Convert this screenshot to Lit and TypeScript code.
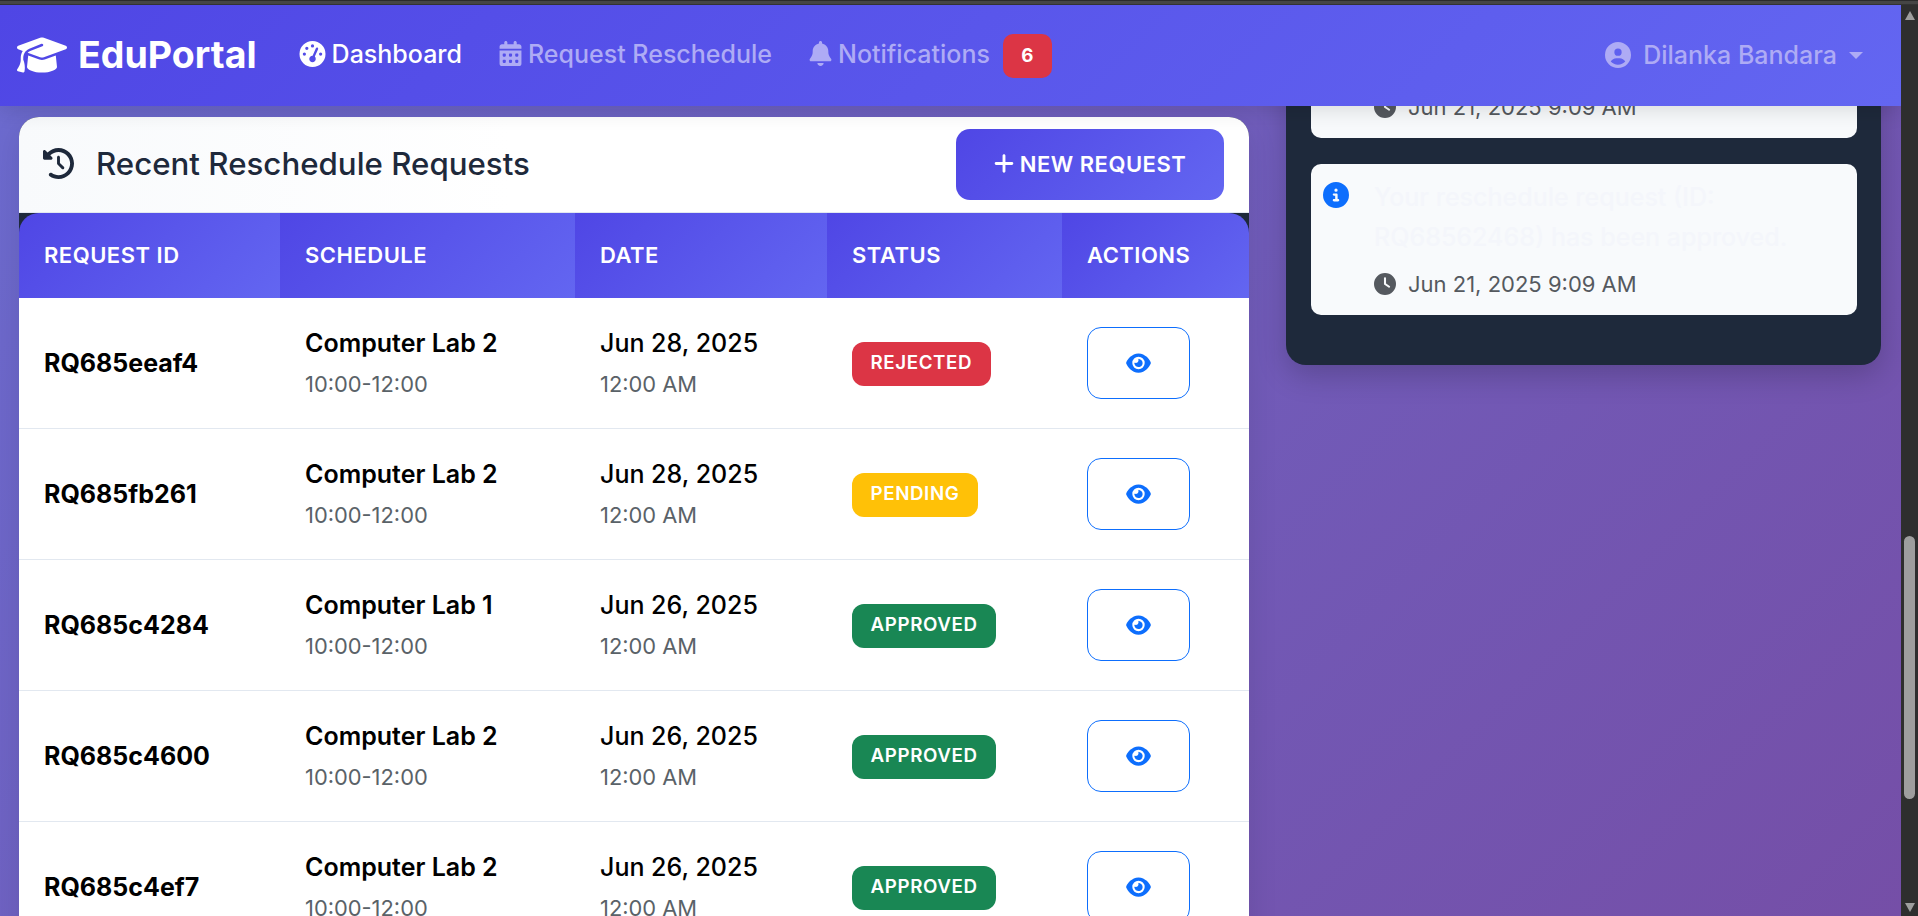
import { LitElement, html, css, svg } from "lit";
import { customElement } from "lit/decorators.js";

const I = {
  cap: ["0 0 640 512", "M320 32c-8.1 0-16.1 1.4-23.7 4.1L15.8 137.4C6.3 140.9 0 149.9 0 160s6.3 19.1 15.8 22.6l57.9 20.9C57.3 229.3 48 259.8 48 291.9v28.1c0 28.4-10.8 57.7-22.3 80.8c-6.5 13-13.9 25.8-22.5 37.6C0 442.7-.9 448.3 .9 453.4s6 8.9 11.2 10.2l64 16c4.2 1.1 8.7 .3 12.4-2s6.3-6.1 7.1-10.4c8.6-42.8 4.3-81.2-2.1-108.7C90.3 344.3 86 329.8 80 316.5V291.9c0-30.2 10.2-58.7 27.9-81.5c12.9-15.5 29.6-28 49.2-35.7l157-61.7c8.2-3.2 17.5 .8 20.7 9s-.8 17.5-9 20.7l-157 61.7c-12.4 4.9-23.3 12.4-32.2 21.6l159.6 57.6c7.6 2.7 15.6 4.1 23.7 4.1s16.1-1.4 23.7-4.1L624.2 182.6c9.5-3.4 15.8-12.5 15.8-22.6s-6.3-19.1-15.8-22.6L343.7 36.1C336.1 33.4 328.1 32 320 32zM128 408c0 35.3 86 72 192 72s192-36.7 192-72L496.7 262.6 354.5 314c-11.1 4-22.8 6-34.5 6s-23.5-2-34.5-6L143.3 262.6 128 408z"],
  gauge: ["0 0 512 512", "M0 256a256 256 0 1 1 512 0A256 256 0 1 1 0 256zM288 96a32 32 0 1 0 -64 0 32 32 0 1 0 64 0zM256 416c35.3 0 64-28.7 64-64c0-17.4-6.9-33.1-18.1-44.6L366 161.7c5.3-12.1-.2-26.3-12.3-31.6s-26.3 .2-31.6 12.3L257.9 288c-.6 0-1.3 0-1.9 0c-35.3 0-64 28.7-64 64s28.7 64 64 64zM176 144a32 32 0 1 0 -64 0 32 32 0 1 0 64 0zM96 288a32 32 0 1 0 0-64 32 32 0 1 0 0 64zm352-32a32 32 0 1 0 -64 0 32 32 0 1 0 64 0z"],
  cal: ["0 0 448 512", "M128 0c17.7 0 32 14.3 32 32V64H288V32c0-17.7 14.3-32 32-32s32 14.3 32 32V64h48c26.5 0 48 21.5 48 48v48H0V112C0 85.5 21.5 64 48 64H96V32c0-17.7 14.3-32 32-32zM0 192H448V464c0 26.5-21.5 48-48 48H48c-26.5 0-48-21.5-48-48V192zm64 80v32c0 8.8 7.2 16 16 16h32c8.8 0 16-7.2 16-16V272c0-8.8-7.2-16-16-16H80c-8.8 0-16 7.2-16 16zm128 0v32c0 8.8 7.2 16 16 16h32c8.8 0 16-7.2 16-16V272c0-8.8-7.2-16-16-16H208c-8.8 0-16 7.2-16 16zm144-16c-8.8 0-16 7.2-16 16v32c0 8.8 7.2 16 16 16h32c8.8 0 16-7.2 16-16V272c0-8.8-7.2-16-16-16H336zM64 400v32c0 8.8 7.2 16 16 16h32c8.8 0 16-7.2 16-16V400c0-8.8-7.2-16-16-16H80c-8.8 0-16 7.2-16 16zm144-16c-8.8 0-16 7.2-16 16v32c0 8.8 7.2 16 16 16h32c8.8 0 16-7.2 16-16V400c0-8.8-7.2-16-16-16H208zm112 16v32c0 8.8 7.2 16 16 16h32c8.8 0 16-7.2 16-16V400c0-8.8-7.2-16-16-16H336c-8.8 0-16 7.2-16 16z"],
  bell: ["0 0 448 512", "M224 0c-17.7 0-32 14.3-32 32V51.2C119 66 64 130.6 64 208v18.8c0 47-17.3 92.4-48.5 127.6l-7.4 8.3c-8.4 9.4-10.4 22.9-5.3 34.4S19.4 416 32 416H416c12.6 0 24-7.4 29.2-18.9s3.1-25-5.3-34.4l-7.4-8.3C401.3 319.2 384 273.9 384 226.8V208c0-77.4-55-142-128-156.8V32c0-17.7-14.3-32-32-32zm45.3 493.3c12-12 18.7-28.3 18.7-45.3H224 160c0 17 6.7 33.3 18.7 45.3s28.3 18.7 45.3 18.7s33.3-6.7 45.3-18.7z"],
  user: ["0 0 512 512", "M399 384.2C376.9 345.8 335.4 320 288 320H224c-47.4 0-88.9 25.8-111 64.2c35.2 39.2 86.2 63.8 143 63.8s107.8-24.7 143-63.8zM0 256a256 256 0 1 1 512 0A256 256 0 1 1 0 256zm256 16a72 72 0 1 0 0-144 72 72 0 1 0 0 144z"],
  history: ["0 0 512 512", "M75 75L41 41C25.9 25.9 0 36.6 0 57.9V168c0 13.3 10.7 24 24 24H134.1c21.4 0 32.1-25.9 17-41l-30.8-30.8C155 85.5 203 64 256 64c106 0 192 86 192 192s-86 192-192 192c-40.8 0-78.6-12.7-109.7-34.4c-14.5-10.1-34.4-6.6-44.6 7.9s-6.6 34.4 7.9 44.6C151.2 495 201.7 512 256 512c141.4 0 256-114.6 256-256S397.4 0 256 0C185.3 0 121.3 28.7 75 75zm181 53c-13.3 0-24 10.7-24 24V256c0 6.4 2.5 12.5 7 17l72 72c9.4 9.4 24.6 9.4 33.9 0s9.4-24.6 0-33.9l-65-65V152c0-13.3-10.7-24-24-24z"],
  plus: ["0 0 448 512", "M256 80c0-17.7-14.3-32-32-32s-32 14.3-32 32V224H48c-17.7 0-32 14.3-32 32s14.3 32 32 32H192V432c0 17.7 14.3 32 32 32s32-14.3 32-32V288H400c17.7 0 32-14.3 32-32s-14.3-32-32-32H256V80z"],
  eye: ["0 0 576 512", "M288 32c-80.8 0-145.5 36.8-192.6 80.6C48.6 156 17.3 208 2.5 243.7c-3.3 7.9-3.3 16.7 0 24.6C17.3 304 48.6 356 95.4 399.4C142.5 443.2 207.2 480 288 480s145.5-36.8 192.6-80.6c46.8-43.5 78.1-95.4 93-131.1c3.3-7.9 3.3-16.7 0-24.6c-14.9-35.7-46.2-87.7-93-131.1C433.5 68.8 368.8 32 288 32zM144 256a144 144 0 1 1 288 0 144 144 0 1 1 -288 0zm144-64c0 35.3-28.7 64-64 64c-7.1 0-13.9-1.2-20.3-3.3c-5.5-1.8-11.9 1.6-11.7 7.4c.3 6.9 1.3 13.8 3.2 20.7c13.7 51.2 66.4 81.6 117.6 67.9s81.6-66.4 67.9-117.6c-11.1-41.5-47.8-69.4-88.6-71.1c-5.8-.2-9.2 6.1-7.4 11.7c2.1 6.4 3.3 13.2 3.3 20.3z"],
  info: ["0 0 512 512", "M256 512A256 256 0 1 0 256 0a256 256 0 1 0 0 512zM216 336h24V272H216c-13.3 0-24-10.7-24-24s10.7-24 24-24h48c13.3 0 24 10.7 24 24v88h8c13.3 0 24 10.7 24 24s-10.7 24-24 24H216c-13.3 0-24-10.7-24-24s10.7-24 24-24zm40-208a32 32 0 1 1 0 64 32 32 0 1 1 0-64z"],
  clock: ["0 0 512 512", "M256 0a256 256 0 1 1 0 512A256 256 0 1 1 256 0zM232 120V256c0 8 4 15.5 10.7 20l96 64c11 7.4 25.9 4.4 33.3-6.7s4.4-25.9-6.7-33.3L280 243.2V120c0-13.3-10.7-24-24-24s-24 10.7-24 24z"],
};

const icon = (k: keyof typeof I, cls: string) =>
  html`<svg class=${cls} viewBox=${I[k][0]} aria-hidden="true">${svg`<path fill="currentColor" d=${I[k][1]}></path>`}</svg>`;

const rows = [
  { id: "RQ685eeaf4", room: "Computer Lab 2", date: "Jun 28, 2025", st: "rejected" },
  { id: "RQ685fb261", room: "Computer Lab 2", date: "Jun 28, 2025", st: "pending" },
  { id: "RQ685c4284", room: "Computer Lab 1", date: "Jun 26, 2025", st: "approved" },
  { id: "RQ685c4600", room: "Computer Lab 2", date: "Jun 26, 2025", st: "approved" },
  { id: "RQ685c4ef7", room: "Computer Lab 2", date: "Jun 26, 2025", st: "approved" },
];

@customElement("app-root")
export class AppRoot extends LitElement {
  static styles = css`
    :host { display: block; height: 916px; overflow: hidden; background: #3a3a3a; font-family: Inter, "Liberation Sans", sans-serif; }
    * { box-sizing: border-box; }
    .frame { display: flex; flex-direction: column; height: 916px; }
    .strip { height: 5px; flex: none; background: linear-gradient(#2b2b2b 0 1px, #454545 1px 4px, #333 4px); }
    .window { flex: 1; display: flex; min-height: 0; }
    .page { flex: 1; min-width: 0; display: flex; flex-direction: column; overflow: hidden;
      background: linear-gradient(135deg, #667eea, #764ba2) 0 -1790px / 100% 3040px no-repeat; }
    .scrollbar { width: 17px; flex: none; background: #2e2e2e; display: flex; flex-direction: column; align-items: center; }
    .arrow { width: 0; height: 0; border-left: 5px solid transparent; border-right: 5px solid transparent; flex: none; }
    .arrow.up { border-bottom: 9px solid #9e9e9e; margin-top: 6px; }
    .arrow.down { border-top: 9px solid #9e9e9e; margin-top: auto; margin-bottom: 4px; }
    .thumb { width: 11px; height: 263px; border-radius: 6px; background: #9e9e9e; margin-top: 516px; flex: none; }

    nav { height: 101px; flex: none; position: relative; z-index: 2; display: flex; align-items: center;
      padding: 0 38px 4px 17px; background: linear-gradient(135deg, #4f46e5, #6366f1);
      box-shadow: 0 5px 20px rgba(0,0,0,.12); color: #aeabf5; }
    .brand { display: flex; align-items: center; gap: 11px; color: #fff; font-size: 37.5px; font-weight: 700; margin: 2px 42px 0 0; }
    .cap { width: 50px; height: 40px; }
    .link { display: flex; align-items: center; gap: 6px; font-size: 25px; font-weight: 500; margin-right: 37px; }
    .link.active { color: #fff; }
    .ni { width: 23px; height: 25px; }
    .ni.gauge { width: 27px; height: 26px; }
    .badge { width: 49px; height: 44px; border-radius: 10px; background: #dc3545; color: #fff; font-size: 18.75px; font-weight: 700;
      display: flex; align-items: center; justify-content: center; margin: 4px 0 0 -24px; }
    .user { margin: 3px 0 0 auto; display: flex; align-items: center; gap: 12px; font-size: 25px; font-weight: 500; }
    .ui { width: 26px; height: 26px; }
    .caret { width: 0; height: 0; border-left: 7.5px solid transparent; border-right: 7.5px solid transparent; border-top: 7.5px solid currentColor; }

    main { flex: 1; min-height: 0; display: flex; align-items: flex-start; gap: 37px; padding: 11px 20px 0 19px; overflow: hidden; }
    .card { width: 1230px; flex: none; border-radius: 20px 20px 0 0; background: #1e293b; overflow: hidden; box-shadow: 0 10px 30px rgba(0,0,0,.1); }
    .head { height: 96px; display: flex; align-items: center; justify-content: space-between; padding: 0 25px 0 24px;
      background: linear-gradient(90deg, #f8fafc, #fff 40%); border-bottom: 1px solid #e2e8f0; color: #1e293b; }
    .title { display: flex; align-items: center; gap: 22px; font-size: 31.25px; font-weight: 500; margin: 0 0 2px; }
    .hi { width: 31px; height: 31px; }
    .new { width: 268px; height: 71px; border: 0; border-radius: 14px; padding: 0 0 2px; color: #fff; font: 600 22px Inter, sans-serif; letter-spacing: .5px;
      background: linear-gradient(135deg, #4f46e5, #6366f1); display: flex; align-items: center; justify-content: center; gap: 6px; }
    .pl { width: 20px; height: 23px; }
    table { width: 1230px; border-collapse: separate; border-spacing: 0; table-layout: fixed; }
    th { height: 85px; padding: 0 25px 2px; text-align: left; color: #fff; font-size: 22px; font-weight: 600; letter-spacing: .5px;
      background: linear-gradient(135deg, #4f46e5, #6366f1); }
    th:first-child { border-top-left-radius: 20px; }
    th:last-child { border-top-right-radius: 20px; }
    td { height: 131px; padding: 0 25px; background: #fff; border-bottom: 1px solid #e2e8f0; color: #000; vertical-align: middle; }
    td.stack { padding-top: 2px; }
    .id { font-size: 25px; font-weight: 700; }
    .main-t { font-size: 25px; font-weight: 600; line-height: 29px; margin-bottom: 12px; }
    .date-t { font-weight: 500; }
    .sub { font-size: 21.875px; color: #5a6268; line-height: 29px; }
    .st { display: inline-block; height: 44px; line-height: 42px; padding: 0 18.5px; margin-top: 2px; border-radius: 12px; color: #fff; font-size: 18.75px; font-weight: 600; letter-spacing: .6px; }
    .rejected { background: #dc3545; }
    .pending { background: #ffc107; }
    .approved { background: #198754; }
    .view { width: 103px; height: 72px; border: 1.25px solid #0d6efd; border-radius: 14px; background: #fff; color: #0d6efd;
      display: flex; align-items: center; justify-content: center; padding: 0; }
    .eye { width: 25px; height: 22px; }

    aside { width: 595px; flex: none; margin-top: -155px; padding: 25px 24px 50px 25px; border-radius: 20px; background: #1e293b;
      display: flex; flex-direction: column; gap: 26px; box-shadow: 0 10px 30px rgba(0,0,0,.2); }
    .note { height: 151px; border-radius: 10px; background: #f8fafc; display: flex; gap: 25px; padding: 13px 12px; }
    .ii { width: 26px; height: 26px; color: #0d6efd; flex: none; margin-top: 5px; }
    .note p { margin: 0 0 14px; font-size: 25px; font-weight: 500; line-height: 40px; color: #f4f6fb; }
    .when { display: flex; align-items: center; gap: 12px; font-size: 22px; color: #55595f; }
    .note.cut { padding-bottom: 18px; }
    .note.cut .body { margin-top: auto; }
    .ci { width: 22px; height: 22px; }
  `;

  private note(cut = false) {
    return html`<div class="note ${cut ? "cut" : ""}">
      ${cut ? html`<span class="ii"></span>` : icon("info", "ii")}
      <div class="body">
        ${cut ? "" : html`<p>Your reschedule request (ID: RQ68562468) has been approved.</p>`}
        <div class="when">${icon("clock", "ci")}<span>Jun 21, 2025 9:09 AM</span></div>
      </div>
    </div>`;
  }

  render() {
    return html`<div class="frame">
      <div class="strip"></div>
      <div class="window">
        <div class="page">
          <nav>
            <div class="brand">${icon("cap", "cap")}<span>EduPortal</span></div>
            <div class="link active">${icon("gauge", "ni gauge")}<span>Dashboard</span></div>
            <div class="link">${icon("cal", "ni")}<span>Request Reschedule</span></div>
            <div class="link">${icon("bell", "ni")}<span>Notifications</span></div>
            <div class="badge">6</div>
            <div class="user">${icon("user", "ui")}<span>Dilanka Bandara</span><i class="caret"></i></div>
          </nav>
          <main>
            <section class="card">
              <div class="head">
                <h2 class="title">${icon("history", "hi")}<span>Recent Reschedule Requests</span></h2>
                <button class="new">${icon("plus", "pl")}<span>NEW REQUEST</span></button>
              </div>
              <table>
                <colgroup><col style="width:261px" /><col style="width:295px" /><col style="width:252px" /><col style="width:235px" /><col style="width:187px" /></colgroup>
                <thead><tr><th>REQUEST ID</th><th>SCHEDULE</th><th>DATE</th><th>STATUS</th><th>ACTIONS</th></tr></thead>
                <tbody>
                  ${rows.map((r) => html`<tr>
                    <td class="id">${r.id}</td>
                    <td class="stack"><div class="main-t">${r.room}</div><div class="sub">10:00-12:00</div></td>
                    <td class="stack"><div class="main-t date-t">${r.date}</div><div class="sub">12:00 AM</div></td>
                    <td><span class="st ${r.st}">${r.st.toUpperCase()}</span></td>
                    <td><button class="view" aria-label="View">${icon("eye", "eye")}</button></td>
                  </tr>`)}
                </tbody>
              </table>
            </section>
            <aside>${this.note(true)}${this.note()}</aside>
          </main>
        </div>
        <div class="scrollbar"><i class="arrow up"></i><i class="thumb"></i><i class="arrow down"></i></div>
      </div>
    </div>`;
  }
}
